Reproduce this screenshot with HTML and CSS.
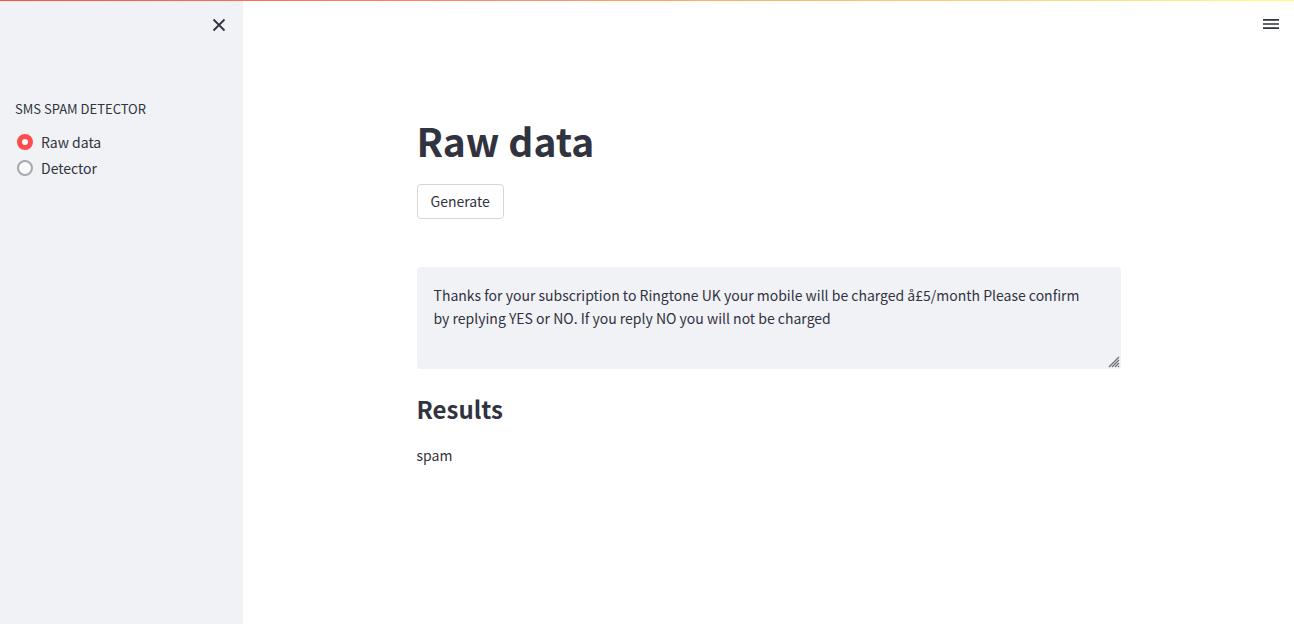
FILE: index.html
```html
<!DOCTYPE html>
<html lang="en">
<head>
<meta charset="utf-8">
<title>SMS Spam Detector</title>
<link rel="stylesheet" href="styles.css">
</head>
<body>
<div class="decoration"></div>
<div class="app">
  <aside class="sidebar">
    <div class="sidebar-top">
      <button class="icon-button" type="button" aria-label="Close sidebar">
        <svg width="20" height="20" viewBox="0 0 20 20" fill="none" stroke="currentColor" stroke-width="1.8"><path d="M4.5 4.5l11 11M15.5 4.5l-11 11"/></svg>
      </button>
    </div>
    <fieldset class="radio-group">
      <legend class="radio-title">SMS SPAM DETECTOR</legend>
      <label class="radio-row"><input class="radio" type="radio" name="page" checked>Raw data</label>
      <label class="radio-row"><input class="radio" type="radio" name="page">Detector</label>
    </fieldset>
  </aside>
  <div class="view">
    <header class="toolbar">
      <button class="icon-button" type="button" aria-label="Main menu">
        <svg width="16" height="16" viewBox="0 0 16 16" fill="currentColor"><path d="M0 3h16v1.8H0zM0 7.2h16v1.6H0zM0 11.2h16v1.8H0z"/></svg>
      </button>
    </header>
    <main class="content">
      <h1 class="title">Raw data</h1>
      <button class="generate" type="button">Generate</button>
      <div class="message-box">
        <textarea class="message" aria-label="Message">Thanks for your subscription to Ringtone UK your mobile will be charged å£5/month Please confirm by replying YES or NO. If you reply NO you will not be charged</textarea>
        <svg class="grip" width="12" height="12" viewBox="0 0 12 12" fill="none" stroke="#6f7076" stroke-width="1.3"><path d="M1 11L11 1M4 11l7-7M7 11l4-4M10 11l1-1"/></svg>
      </div>
      <h2 class="subtitle">Results</h2>
      <p class="result">spam</p>
    </main>
  </div>
</div>
</body>
</html>
```
FILE: styles.css
```css
* { box-sizing: border-box; }
body {
  margin: 0;
  background: #fff;
  color: #31333f;
  font: 400 14px/24px "Noto Sans CJK SC", "Noto Sans", sans-serif;
}
button, textarea { font: inherit; color: inherit; }
.decoration {
  position: absolute;
  inset: 0 0 auto;
  height: 1px;
  background: linear-gradient(90deg, #ff4b4b, #fffd80);
}
.app { display: flex; min-height: 100vh; }
.sidebar {
  flex: 0 0 243px;
  padding: 10px 9px 0 15px;
  background: #f0f2f6;
}
.sidebar-top { display: flex; justify-content: flex-end; margin-bottom: 59px; }
.icon-button {
  display: flex;
  align-items: center;
  justify-content: center;
  padding: 5px;
  border: 0;
  background: none;
  cursor: pointer;
}
.radio-group { margin: 0; padding: 0; border: 0; }
.radio-title { padding: 0; margin-bottom: 10px; font-size: 13px; line-height: 20px; }
.radio-row { display: flex; align-items: center; gap: 8px; height: 26px; padding-left: 2px; }
.radio {
  appearance: none;
  width: 16px;
  height: 16px;
  margin: 0;
  border: 2px solid #a3a8b4;
  border-radius: 50%;
  background: #fafafa;
}
.radio:checked { border: 5px solid #ff4b4b; background: #fff; }
.view { flex: 1; min-width: 0; }
.toolbar { display: flex; justify-content: flex-end; padding: 11px 10px 0; }
.content {
  display: flex;
  flex-direction: column;
  align-items: flex-start;
  max-width: 736px;
  margin: 0 auto;
  padding: 76px 16px;
}
.title { margin: 0 0 17px; font-size: 39px; line-height: 54px; font-weight: 700; }
.generate {
  height: 35px;
  padding: 0 13px 2px;
  border: 1px solid #d6d6d9;
  border-radius: 4px;
  background: #fff;
  cursor: pointer;
}
.message-box { position: relative; width: 100%; margin: 48px 0 24px; }
.message {
  display: block;
  width: 100%;
  height: 102px;
  padding: 17px 24px 17px 17px;
  border: 0;
  border-radius: 4px;
  background: #f0f2f6;
  line-height: 23px;
  resize: vertical;
}
.message::-webkit-resizer { background: transparent; }
.grip { position: absolute; right: 1px; bottom: 1px; pointer-events: none; }
.subtitle { margin: 0 0 18px; font-size: 24px; line-height: 32px; font-weight: 700; }
.result { margin: 0; }
```
